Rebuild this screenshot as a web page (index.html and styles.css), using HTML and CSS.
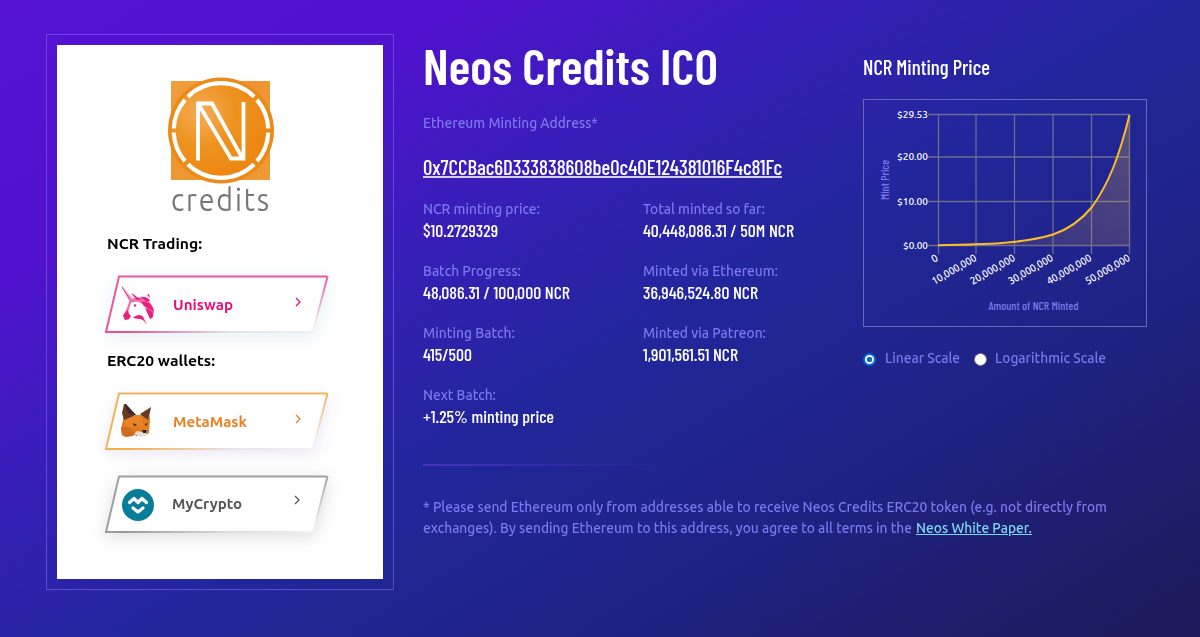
FILE: index.html
```html
<!DOCTYPE html>
<html lang="en">
<head>
    <meta charset="UTF-8">
    <meta name="viewport" content="width=device-width, initial-scale=1.0">
    <title>Neos Credits ICO</title>
    <link rel="stylesheet" href="styles.css">
</head>
<body>
    <div class="page">
        <aside class="frame">
            <div class="panel">
                <svg class="logo" viewBox="0 0 120 110" width="120" height="110">
                    <defs>
                        <radialGradient id="coin" cx="30%" cy="32%" r="70%">
                            <stop offset="0" stop-color="#f5ad58"/>
                            <stop offset="0.5" stop-color="#ee921f"/>
                            <stop offset="1" stop-color="#ec8712"/>
                        </radialGradient>
                        <linearGradient id="square" x1="0" y1="0" x2="1" y2="1">
                            <stop offset="0" stop-color="#f3a141"/>
                            <stop offset="0.25" stop-color="#ee9430"/>
                            <stop offset="1" stop-color="#ef9a35"/>
                        </linearGradient>
                    </defs>
                    <rect x="11" y="5" width="99" height="99" fill="url(#square)"/>
                    <circle cx="61" cy="54.500" r="53" fill="#ec8a18"/>
                    <circle cx="61" cy="54.500" r="49" fill="url(#coin)"/>
                    <circle cx="61" cy="54.500" r="47.3" fill="none" stroke="#fff" stroke-width="4.2" pathLength="360" stroke-dasharray="38 5 89 5 38 5" stroke-dashoffset="-2.5"/>
                    <path d="M38 84.500V27.500h14L82.500 82.500H71L39 29M83.500 26v56.500H71" fill="none" stroke="#fff" stroke-width="3.8"/>
                </svg>
                <div class="logo-text"><span class="fit" data-width="100">credits</span></div>

                <h3><span class="fit" data-width="95">NCR Trading:</span></h3>
                <a class="wallet uniswap">
                    <svg class="wallet-frame" viewBox="0 0 224 58" width="224" height="58">
                        <path d="M14 1.500h208l-14 55.500H1.500z" fill="#fff"/>
                        <path d="M1 57L14 1.500h208.500" fill="none" stroke="#e7589d" stroke-width="2"/>
                        <path d="M222.500 1.500L208 57" fill="none" stroke="url(#pinkFade)" stroke-width="2"/>
                        <path d="M0 57H208" fill="none" stroke="url(#pinkBase)" stroke-width="2"/>
                    </svg>
                    <svg class="wallet-icon" viewBox="0 0 36 42" width="36" height="42">
                        <path d="M1 0l13 15-3 5z" fill="#f7a4cb"/>
                        <path d="M2 2l9 14M12 9l6 7" stroke="#e4338a" stroke-width="1" fill="none"/>
                        <path d="M9 17c3-4 8-6 13-4 7 1 12 8 12 15l-4 7c0-8-3-13-9-17-5-2-8-1-10 3l-4 8 3 5-5 1-2-4 4-8z" fill="#f26fab"/>
                        <path d="M11 18c5-3 11 0 12 5l-2 9-9-2 2 4 9 5-8-2-8-5 2-8z" fill="#fff"/>
                        <path d="M8 25l-5 5 2 5 4-1 2-3-2-2zM12 8l6 5 5 1-6 1zM20 12c5-1 9 1 10 4l-4 1c-2-3-4-4-6-5zM21 17c7-1 12 3 13 10-3-3-8-4-10-6zM25 23c5 2 9 3 8 9l-3 2zM13 33c5-5 10-3 11 1l3 6c-3-4-4-6-8-6z" fill="#e8207d"/>
                        <path d="M27 10l2-1 1 4z" fill="#e8207d"/>
                        <circle cx="15" cy="20.500" r="1.200" fill="#d82679"/>
                    </svg>
                    <span class="wallet-name"><span class="fit" data-width="60">Uniswap</span></span>
                    <svg class="chevron" viewBox="0 0 8 12" width="8" height="12"><path d="M2 2l4 4-4 4" fill="none" stroke="currentColor" stroke-width="1.300"/></svg>
                </a>

                <h3 class="second"><span class="fit" data-width="108">ERC20 wallets:</span></h3>
                <a class="wallet metamask">
                    <svg class="wallet-frame" viewBox="0 0 224 58" width="224" height="58">
                        <path d="M14 1.500h208l-14 55.500H1.500z" fill="#fff"/>
                        <path d="M1 57L14 1.500h208.500" fill="none" stroke="#edb65b" stroke-width="2"/>
                        <path d="M222.500 1.500L208 57" fill="none" stroke="url(#orangeFade)" stroke-width="2"/>
                        <path d="M0 57H208" fill="none" stroke="url(#orangeBase)" stroke-width="2"/>
                    </svg>
                    <svg class="wallet-icon" viewBox="0 0 36 42" width="36" height="42">
                        <path d="M4 14l11 0 14-3 1 6-1 14-5 3-8 0-3-3-7 4-4-2-1-6z" fill="#e37a20"/>
                        <path d="M4 2l12 11-12 5-2-7zM31 5l-11 7 8 6 2-8z" fill="#653b24"/>
                        <path d="M4 2l2 0 10 11-7-1z" fill="#3d2825"/>
                        <path d="M16 13l5 0 3 13-7-3-9 2-4-6z" fill="#ea8426"/>
                        <path d="M1 25l9 1 6 5-3 3-7 1-4-2z" fill="#cf6c20"/>
                        <path d="M17 29l5 1 5-3-1 6-5 2-7-3z" fill="#e5dfda"/>
                        <path d="M22 28h5l-1 3h-3zM13 21l4 2-3 1zM25 22l3-1-2 3z" fill="#22252c"/>
                    </svg>
                    <span class="wallet-name"><span class="fit" data-width="74">MetaMask</span></span>
                    <svg class="chevron" viewBox="0 0 8 12" width="8" height="12"><path d="M2 2l4 4-4 4" fill="none" stroke="currentColor" stroke-width="1.300"/></svg>
                </a>

                <a class="wallet mycrypto">
                    <svg class="wallet-frame" viewBox="0 0 224 58" width="224" height="58">
                        <defs>
                            <linearGradient id="pinkFade" gradientUnits="userSpaceOnUse" x1="0" y1="0" x2="0" y2="50"><stop stop-color="#e7589d"/><stop offset="1" stop-color="#eef3f6"/></linearGradient>
                            <linearGradient id="pinkBase" gradientUnits="userSpaceOnUse" x1="0" y1="0" x2="208" y2="0"><stop offset="0.1" stop-color="#ef4c96"/><stop offset="0.6" stop-color="#e5e1e9"/><stop offset="1" stop-color="#edf2f5"/></linearGradient>
                            <linearGradient id="orangeFade" gradientUnits="userSpaceOnUse" x1="0" y1="0" x2="0" y2="50"><stop stop-color="#edb65b"/><stop offset="1" stop-color="#f4f1f7"/></linearGradient>
                            <linearGradient id="orangeBase" gradientUnits="userSpaceOnUse" x1="0" y1="0" x2="208" y2="0"><stop offset="0.1" stop-color="#f1b047"/><stop offset="0.6" stop-color="#e9e2e7"/><stop offset="1" stop-color="#f4f1f7"/></linearGradient>
                            <linearGradient id="grayFade" gradientUnits="userSpaceOnUse" x1="0" y1="0" x2="0" y2="50"><stop stop-color="#a0a0a0"/><stop offset="1" stop-color="#f2f2f2"/></linearGradient>
                            <linearGradient id="grayBase" gradientUnits="userSpaceOnUse" x1="0" y1="0" x2="208" y2="0"><stop offset="0.1" stop-color="#999"/><stop offset="0.6" stop-color="#dedede"/><stop offset="1" stop-color="#f2f2f2"/></linearGradient>
                        </defs>
                        <path d="M14 1.500h208l-14 55.500H1.500z" fill="#fff"/>
                        <path d="M1 57L14 1.500h208.500" fill="none" stroke="#a0a0a0" stroke-width="2"/>
                        <path d="M222.500 1.500L208 57" fill="none" stroke="url(#grayFade)" stroke-width="2"/>
                        <path d="M0 57H208" fill="none" stroke="url(#grayBase)" stroke-width="2"/>
                    </svg>
                    <svg class="wallet-icon" viewBox="0 0 36 42" width="36" height="42">
                        <circle cx="19" cy="21" r="16" fill="#087d99"/>
                        <path d="M10.500 18.500l4.500-4 4 4 4-4 4.500 4M14 24l5 4 5-4" fill="none" stroke="#fff" stroke-width="3.200" stroke-linecap="round" stroke-linejoin="round"/>
                    </svg>
                    <span class="wallet-name"><span class="fit" data-width="70">MyCrypto</span></span>
                    <svg class="chevron" viewBox="0 0 8 12" width="8" height="12"><path d="M2 2l4 4-4 4" fill="none" stroke="currentColor" stroke-width="1.300"/></svg>
                </a>
            </div>
        </aside>

        <main class="content">
            <div class="top">
                <section class="details">
                    <h1><span class="fit" data-width="295">Neos Credits ICO</span></h1>
                    <p class="label"><span class="fit" data-width="175">Ethereum Minting Address*</span></p>
                    <p class="address"><span class="fit" data-width="359">0x7CCBac6D333838608be0c40E124381016F4c81Fc</span></p>
                    <div class="stats">
                        <div class="stat">
                            <p class="label"><span class="fit" data-width="117">NCR minting price:</span></p>
                            <p class="value"><span class="fit" data-width="75">$10.2729329</span></p>
                        </div>
                        <div class="stat">
                            <p class="label"><span class="fit" data-width="122">Total minted so far:</span></p>
                            <p class="value"><span class="fit" data-width="151">40,448,086.31 / 50M NCR</span></p>
                        </div>
                        <div class="stat">
                            <p class="label"><span class="fit" data-width="98">Batch Progress:</span></p>
                            <p class="value"><span class="fit" data-width="147">48,086.31 / 100,000 NCR</span></p>
                        </div>
                        <div class="stat">
                            <p class="label"><span class="fit" data-width="135">Minted via Ethereum:</span></p>
                            <p class="value"><span class="fit" data-width="115">36,946,524.80 NCR</span></p>
                        </div>
                        <div class="stat">
                            <p class="label"><span class="fit" data-width="92">Minting Batch:</span></p>
                            <p class="value"><span class="fit" data-width="49">415/500</span></p>
                        </div>
                        <div class="stat">
                            <p class="label"><span class="fit" data-width="123">Minted via Patreon:</span></p>
                            <p class="value"><span class="fit" data-width="95">1,901,561.51 NCR</span></p>
                        </div>
                        <div class="stat">
                            <p class="label"><span class="fit" data-width="73">Next Batch:</span></p>
                            <p class="value"><span class="fit" data-width="131">+1.25% minting price</span></p>
                        </div>
                    </div>
                </section>

                <section class="minting">
                    <h2><span class="fit" data-width="127">NCR Minting Price</span></h2>
                    <svg class="chart" viewBox="863 99 284 228" width="284" height="228">
                        <defs>
                            <linearGradient id="area" x1="0" y1="1" x2="1" y2="0">
                                <stop offset="0" stop-color="#f5b93c" stop-opacity="0.05"/>
                                <stop offset="1" stop-color="#f5b93c" stop-opacity="0.28"/>
                            </linearGradient>
                        </defs>
                        <rect class="chart-border" x="863.5" y="99.5" width="283" height="227"/>
                        <path class="grid" d="M928 114.500h202M928 157h202M928 201.500h202M928 245.500h202M938.500 114v140M976 114v140M1014.500 114v140M1053 114v140M1091.500 114v140M1129.500 114v140"/>
                        <path fill="url(#area)" d="M938 245C985 244.500 1023 243.500 1053 234.500C1072 228 1083 218 1092 207C1109 183 1119 157 1129.500 115V245z"/>
                        <path class="curve" d="M938 245.200C985 244.500 1023 243.500 1053 234.500C1072 228 1083 218 1092 207C1109 183 1119 157 1129.500 115"/>
                        <g class="ticks">
                            <text x="897" y="118" textLength="31" lengthAdjust="spacingAndGlyphs">$29.53</text>
                            <text x="897" y="160" textLength="31" lengthAdjust="spacingAndGlyphs">$20.00</text>
                            <text x="897" y="204.500" textLength="31" lengthAdjust="spacingAndGlyphs">$10.00</text>
                            <text x="903" y="249" textLength="25" lengthAdjust="spacingAndGlyphs">$0.00</text>
                        </g>
                        <g class="ticks ticks-x">
                            <text transform="translate(939 260) rotate(-30)">0</text>
                            <text transform="translate(977.500 260) rotate(-30)" textLength="50" lengthAdjust="spacingAndGlyphs">10,000,000</text>
                            <text transform="translate(1016 260) rotate(-30)" textLength="50" lengthAdjust="spacingAndGlyphs">20,000,000</text>
                            <text transform="translate(1054 260) rotate(-30)" textLength="50" lengthAdjust="spacingAndGlyphs">30,000,000</text>
                            <text transform="translate(1092.500 260) rotate(-30)" textLength="50" lengthAdjust="spacingAndGlyphs">40,000,000</text>
                            <text transform="translate(1131 260) rotate(-30)" textLength="50" lengthAdjust="spacingAndGlyphs">50,000,000</text>
                        </g>
                        <text class="axis" transform="translate(889 200) rotate(-90)" textLength="40" lengthAdjust="spacingAndGlyphs">Mint Price</text>
                        <text class="axis" x="988.500" y="310" textLength="90" lengthAdjust="spacingAndGlyphs">Amount of NCR Minted</text>
                    </svg>
                    <div class="scales">
                        <span class="radio checked"></span>
                        <span class="label"><span class="fit" data-width="75">Linear Scale</span></span>
                        <span class="radio"></span>
                        <span class="label"><span class="fit" data-width="111">Logarithmic Scale</span></span>
                    </div>
                </section>
            </div>

            <div class="divider"></div>
            <p class="note">
                <span class="fit" data-width="684">* Please send Ethereum only from addresses able to receive Neos Credits ERC20 token (e.g. not directly from</span><br>
                <span class="fit" data-width="489">exchanges). By sending Ethereum to this address, you agree to all terms in the</span><a class="paper"><span class="fit" data-width="116">Neos White Paper.</span></a>
            </p>
        </main>
    </div>
    <script src="fit.js"></script>
</body>
</html>
```
FILE: styles.css
```css
* {
    box-sizing: border-box;
}
body {
    margin: 0;
    height: 637px;
    overflow: hidden;
    font-family: 'Ubuntu', 'Noto Sans', sans-serif;
    background: linear-gradient(149deg, #5512d3 0%, #5012ce 21%, #3320b4 39%, #21269b 53%, #1f2388 70%, #1d1a58 100%);
}
h1, h2, h3, p {
    margin: 0;
    font-weight: normal;
}
.page {
    display: flex;
    padding: 34px 46px 0;
}
/* fit.js scales the text to data-width */
.fit {
    display: inline-block;
    white-space: nowrap;
    transform-origin: 0 50%;
}
.frame {
    width: 348px;
    height: 556px;
    padding: 10px;
    border: 1px solid rgba(126, 103, 235, 0.6);
    flex: none;
}
.panel {
    height: 534px;
    background-color: #fff;
    padding: 31px 0 0 48px;
    width: 326px;
    overflow: hidden;
}
.logo {
    display: block;
    margin: 0 0 0 55px;
}
.logo-text {
    height: 36px;
    margin: -5px 0 0 66px;
    font-weight: 400;
    font-size: 31px;
    line-height: 38px;
    letter-spacing: 2px;
    color: #777;
}
h3 {
    height: 24px;
    margin: 15px 0 0 2px;
    font-size: 15.5px;
    font-weight: 600;
    line-height: 23px;
    color: #000;
}
h3.second {
    margin-top: 16px;
}
.wallet {
    position: relative;
    display: flex;
    align-items: center;
    width: 224px;
    height: 58px;
    margin-top: 19px;
    filter: drop-shadow(0 4px 8px rgba(90, 170, 195, 0.16));
}
.wallet + .wallet {
    margin-top: 25px;
}
.wallet-frame {
    position: absolute;
    left: 0;
    top: 0;
}
.wallet-icon {
    position: relative;
    margin: 4px 0 0 15px;
    flex: none;
}
.wallet-name {
    position: relative;
    margin: 1px 0 0 17px;
    width: 121px;
    font-size: 15.5px;
    font-weight: bold;
    line-height: 20px;
}
.chevron {
    position: relative;
    margin-top: -5px;
}
.uniswap {
    color: #e5107d;
}
.metamask {
    color: #e78123;
    filter: drop-shadow(0 4px 8px rgba(130, 80, 190, 0.14));
}
.mycrypto {
    color: #555;
    filter: drop-shadow(0 4px 8px rgba(0, 0, 0, 0.13));
}
.mycrypto .wallet-icon {
    margin: 2px 0 0 14px;
}
.mycrypto .wallet-name {
    margin: -1px 0 0 17px;
}
.mycrypto .chevron {
    margin-top: -9px;
}
.content {
    padding-left: 29px;
    width: 760px;
    flex: none;
}
.top {
    display: grid;
    grid-template-columns: 440px 284px;
    height: 430px;
}
h1 {
    height: 64px;
    font-family: 'Barlow Condensed', Roboto, sans-serif;
    font-size: 50px;
    font-weight: 600;
    line-height: 63px;
    color: #fff;
}
.label {
    height: 22px;
    font-size: 14.5px;
    font-weight: 500;
    line-height: 22px;
    color: #7c78ee;
}
h1 + .label {
    margin-top: 14px;
}
.address {
    height: 28px;
    margin-top: 19px;
    font-family: 'Barlow Condensed', Roboto, sans-serif;
    font-size: 20.5px;
    font-weight: 500;
    line-height: 27px;
    color: #fff;
}
.address .fit {
    text-decoration: underline;
    text-underline-offset: 1px;
    text-decoration-thickness: 2px;
    text-decoration-color: #d5cff5;
}
.stats {
    display: grid;
    grid-template-columns: 220px 220px;
    grid-auto-rows: 62px;
    margin-top: 17px;
}
.value {
    height: 22px;
    font-family: 'Barlow Condensed', Roboto, sans-serif;
    font-size: 17px;
    font-weight: 500;
    line-height: 20px;
    color: #fff;
}
h2 {
    height: 30px;
    margin-top: 18px;
    font-family: 'Barlow Condensed', Roboto, sans-serif;
    font-size: 20.5px;
    font-weight: 500;
    line-height: 30px;
    color: #fff;
}
.chart {
    display: block;
    margin-top: 17px;
}
.chart-border {
    fill: none;
    stroke: #666ab6;
}
.grid {
    fill: none;
    stroke: #6d6c8f;
    stroke-width: 1.3;
}
.curve {
    fill: none;
    stroke: #f8bd27;
    stroke-width: 2;
}
.ticks {
    fill: #fff;
    font-size: 9.5px;
    font-weight: 500;
}
.ticks-x {
    font-size: 10.5px;
    text-anchor: end;
}
.axis {
    fill: #7b78e8;
    font-family: 'Barlow Condensed', Roboto, sans-serif;
    font-size: 11px;
    font-weight: 500;
}
.scales {
    display: flex;
    align-items: center;
    margin-top: 20px;
}
.radio {
    width: 13px;
    height: 13px;
    margin: 3px 9px 0 0;
    border: 1px solid #777;
    border-radius: 50%;
    background-color: #fff;
}
.radio.checked {
    border: 2px solid #0868dc;
    background: radial-gradient(circle, #0868dc 0 2.5px, #fff 3px);
}
.label + .radio {
    margin: 3px 8px 0 14px;
}
.divider {
    width: 250px;
    height: 2px;
    background: linear-gradient(90deg, #4532bb, rgba(69, 50, 187, 0));
}
.note {
    margin-top: 30px;
    font-size: 14.5px;
    font-weight: 500;
    line-height: 21px;
    color: #7c78ee;
    white-space: nowrap;
}
.paper {
    margin-left: 4px;
    color: #7fd9ee;
}
.paper .fit {
    text-decoration: underline;
}
```
FILE: fit.js
```js
// Scale each text horizontally so that it takes up data-width pixels
document.querySelectorAll('.fit').forEach(function(el) {
    const natural = el.getBoundingClientRect().width;
    const target = Number(el.dataset.width);
    el.style.transform = 'scaleX(' + target / natural + ')';
    el.style.marginRight = (target - natural) + 'px';
});
```
